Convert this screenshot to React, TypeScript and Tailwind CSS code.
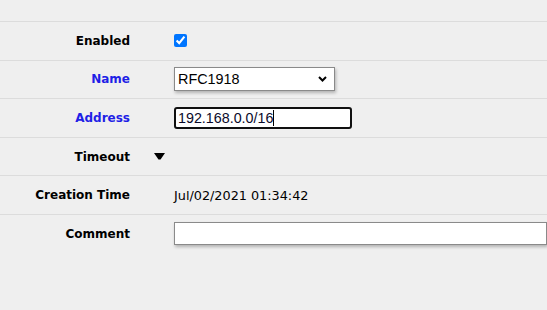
const labelCls =
	"w-[130px] shrink-0 text-right text-[12px] font-bold font-['DejaVu_Sans',sans-serif]";

function Row({
	label,
	blue,
	children,
}: {
	label: string;
	blue?: boolean;
	children?: React.ReactNode;
}) {
	return (
		<div className="flex h-[38.6px] items-center border-t border-[#dcdcdc]">
			<div className={labelCls + (blue ? " text-[#1f1fe6]" : " text-black")}>{label}</div>
			<div className="ml-[44px] flex flex-1 items-center">{children}</div>
		</div>
	);
}

export default function App() {
	return (
		<div className="h-[310px] w-[547px] overflow-hidden bg-[#efefef] pt-[21px]">
			<Row label="Enabled">
				<input type="checkbox" defaultChecked className="m-0 h-[13px] w-[13px] accent-[#0075ff]" />
			</Row>
			<Row label="Name" blue>
				<div className="flex h-[24px] w-[161px] items-center justify-between border border-[#8a8a8a] bg-white pl-[3px] pr-[7px] shadow-[1px_2px_3px_rgba(0,0,0,0.25)]">
					<span className="text-[14.4px] leading-none text-black font-['Liberation_Sans',sans-serif]">RFC1918</span>
					<svg width="9" height="6" viewBox="0 0 9 6">
						<path d="M1 1 L4.5 4.5 L8 1" fill="none" stroke="#000" strokeWidth="2" />
					</svg>
				</div>
			</Row>
			<Row label="Address" blue>
				<div className="flex h-[22px] w-[178px] items-center rounded-[3px] border-2 border-[#101010] bg-white pl-[2px]">
					<span className="text-[14.3px] leading-none text-[#0a0a2a] font-['Liberation_Sans',sans-serif]">192.168.0.0/16</span>
					<span className="h-[16px] w-px bg-black" />
				</div>
			</Row>
			<Row label="Timeout">
				<svg width="11" height="7" viewBox="0 0 11 7" className="-ml-[20px]">
					<path d="M0 0 H11 L6.5 6.5 H4.5 Z" fill="#000" />
				</svg>
			</Row>
			<Row label="Creation Time">
				<span className="text-[12.8px] text-black font-['DejaVu_Sans',sans-serif]">Jul/02/2021 01:34:42</span>
			</Row>
			<div className="flex h-[38.6px] items-center border-t border-[#dcdcdc]">
				<div className={labelCls + " text-black"}>Comment</div>
				<div className="ml-[44px] h-[23px] flex-1 border border-[#8a8a8a] bg-white shadow-[1px_2px_3px_rgba(0,0,0,0.25)]" />
			</div>
		</div>
	);
}
